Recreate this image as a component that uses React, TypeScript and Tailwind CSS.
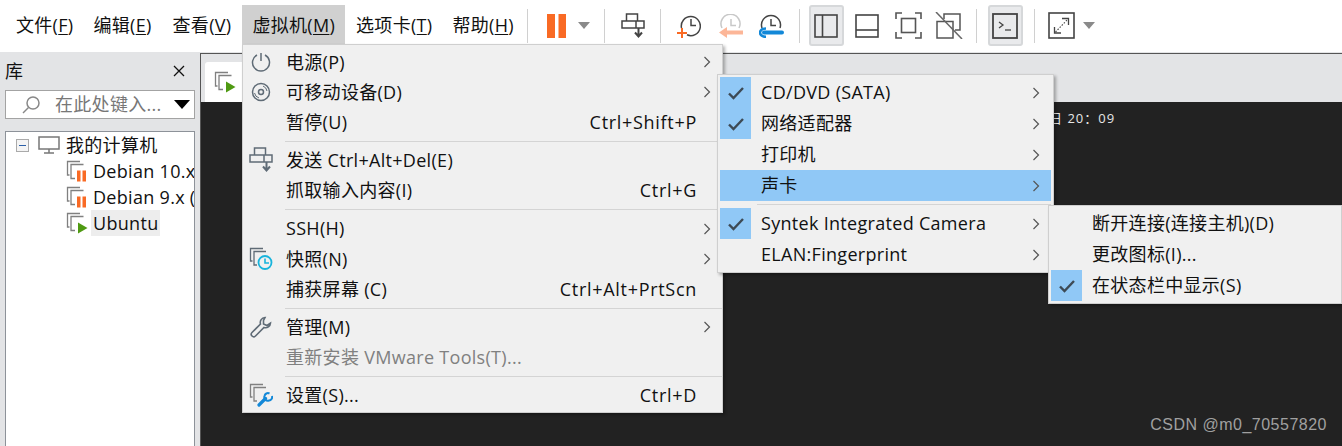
import React from "react";

const FONT = '"Open Sans","Noto Sans CJK SC",sans-serif';

function U({ c }: { c: string }) {
  return <span className="underline underline-offset-2 decoration-1">{c}</span>;
}

function VmIcon({ kind }: { kind: "pause" | "play" }) {
  return (
    <svg width="22" height="22" viewBox="0 0 22 22" fill="none">
      <path d="M14 1.5H1.5V15h2M17.5 4.5H5V18.5h4" stroke="#808080" strokeWidth="1.3" />
      {kind === "pause" ? (
        <>
          <rect x="11" y="10.5" width="3.5" height="11" fill="#f96a24" />
          <rect x="16.5" y="10.5" width="3.5" height="11" fill="#f96a24" />
        </>
      ) : (
        <path d="M12 10.5L21.5 16L12 21.5Z" fill="#4f9a12" />
      )}
    </svg>
  );
}

function SendIcon({ color = "#444" }: { color?: string }) {
  return (
    <svg width="24" height="26" viewBox="0 0 24 26" fill="none" stroke={color} strokeWidth="1.5">
      <path d="M5.5 1H16.5V8H5.5V1ZM1 8H15V15H1V8ZM15 8H23V15H15V8Z" />
      <path d="M17.5 15V22M14 19.5L17.5 23.5L21 19.5" strokeWidth="2" />
    </svg>
  );
}

function ToolButton({ active, children }: { active?: boolean; children: React.ReactNode }) {
  return (
    <div
      className={
        active
          ? "w-[35px] h-[41px] flex items-center justify-center rounded-[3px] border-2 border-[#d6d8da] bg-[#e9eaec] shrink-0"
          : "w-[35px] h-[41px] flex items-center justify-center shrink-0"
      }
    >
      {children}
    </div>
  );
}

function Toolbar() {
  return (
    <div className="flex items-center h-[52px] bg-white pl-[6px]">
      <div className="flex items-center h-[40px] mt-[-2px] text-[#111]">
        <span className="px-[10px] leading-[40px]">文件(<U c="F" />)</span>
        <span className="px-[10px] leading-[40px]">编辑(<U c="E" />)</span>
        <span className="px-[10px] ml-[1px] leading-[40px]">查看(<U c="V" />)</span>
        <span className="px-[10px] ml-[1px] leading-[40px] bg-[#d0d0d0] h-[40px]">虚拟机(<U c="M" />)</span>
        <span className="px-[10px] ml-[1px] leading-[40px]">选项卡(<U c="T" />)</span>
        <span className="px-[10px] leading-[40px]">帮助(<U c="H" />)</span>
      </div>
      <div className="flex items-center ml-[3px] mt-[-1px]">
        <div className="w-px h-[34px] bg-[#d0d0d0] mr-[19px]" />
        <svg width="19" height="24" viewBox="0 0 19 24" className="mr-[12px]">
          <rect x="0" y="0" width="8" height="24" fill="#f96a24" />
          <rect x="11.5" y="0" width="7.5" height="24" fill="#f96a24" />
        </svg>
        <svg width="12" height="7" viewBox="0 0 12 7" className="mr-[14px]"><path d="M0 0H12L6 7Z" fill="#8a8a8a" /></svg>
        <div className="w-px h-[34px] bg-[#d0d0d0] mr-[16px]" />
        <div className="mr-[15px] flex"><SendIcon /></div>
        <div className="w-px h-[34px] bg-[#d0d0d0] mr-[16px]" />
        <svg width="24" height="24" viewBox="0 0 24 24" fill="none" className="mr-[18px]">
          <path d="M4.5 14A9.5 9.5 0 1 1 10 20.8" stroke="#444" strokeWidth="1.5" />
          <path d="M14 5V11.5H19" stroke="#444" strokeWidth="1.5" />
          <path d="M0 19H10M5 14V24" stroke="#f96a24" strokeWidth="2" />
        </svg>
        <svg width="24" height="24" viewBox="0 0 24 24" fill="none" className="mr-[16px]">
          <path d="M3 14A9.5 9.5 0 1 1 20 14" stroke="#c8c8c8" strokeWidth="1.5" />
          <path d="M12 5V11.5H17" stroke="#c8c8c8" strokeWidth="1.5" />
          <path d="M24 18.5H6" stroke="#fcb698" strokeWidth="4" />
          <path d="M0 18.5L8 13V24Z" fill="#fcb698" />
        </svg>
        <svg width="25" height="24" viewBox="0 0 25 24" fill="none" className="mr-[15px]">
          <path d="M3 14A9.5 9.5 0 1 1 21 14" stroke="#444" strokeWidth="1.5" />
          <path d="M12 5V11.5H17" stroke="#444" strokeWidth="1.5" />
          <path d="M5 18.5H23" stroke="#1288d8" strokeWidth="4" strokeLinecap="round" />
          <path d="M7 14.5C2.5 14.5 1 17 1 18.5C1 20 2.5 22.8 7 22.8" stroke="#1288d8" strokeWidth="2.6" />
        </svg>
        <div className="w-px h-[34px] bg-[#d0d0d0] mr-[9px]" />
        <ToolButton active>
          <svg width="24" height="24" viewBox="0 0 24 24" fill="none" stroke="#444" strokeWidth="1.6">
            <rect x="1" y="1" width="22" height="22" /><path d="M8.5 1V23" />
          </svg>
        </ToolButton>
        <div className="ml-[6px]" />
        <ToolButton>
          <svg width="24" height="24" viewBox="0 0 24 24" fill="none" stroke="#444" strokeWidth="1.6">
            <rect x="1" y="1" width="22" height="22" /><path d="M1 16H23" />
          </svg>
        </ToolButton>
        <div className="ml-[6px]" />
        <ToolButton>
          <svg width="27" height="27" viewBox="0 0 27 27" fill="none" stroke="#555" strokeWidth="1.6">
            <path d="M1 7V1H7M20 1H26V7M26 20V26H20M7 26H1V20" />
            <rect x="6.5" y="6.5" width="14" height="14" />
          </svg>
        </ToolButton>
        <div className="ml-[6px]" />
        <ToolButton>
          <svg width="28" height="27" viewBox="0 0 28 27" fill="none" stroke="#555" strokeWidth="1.5">
            <path d="M9 7V2H25V18H20M2 9.5H18V26H2V9.5Z" />
            <path d="M1 0L27 27" stroke="#666" />
          </svg>
        </ToolButton>
        <div className="w-px h-[34px] bg-[#d0d0d0] ml-[9px] mr-[11px]" />
        <ToolButton active>
          <svg width="26" height="26" viewBox="0 0 26 26" fill="none" stroke="#444">
            <rect x="1" y="1" width="24" height="24" strokeWidth="1.8" />
            <path d="M7 9L11 12L7 15" strokeWidth="1.3" />
            <path d="M13 17H19" strokeWidth="1.3" />
          </svg>
        </ToolButton>
        <div className="w-px h-[34px] bg-[#d0d0d0] ml-[11px] mr-[13px]" />
        <svg width="27" height="27" viewBox="0 0 27 27" fill="none" stroke="#444" className="mr-[8px]">
          <rect x="1" y="1" width="25" height="25" strokeWidth="1.6" />
          <path d="M6.5 15V21H13M14 6.5H20.5V13" strokeWidth="1.3" />
          <path d="M7.5 20L19.5 7.5" strokeWidth="1.1" strokeDasharray="1.5 1.5" />
        </svg>
        <svg width="12" height="7" viewBox="0 0 12 7"><path d="M0 0H12L6 7Z" fill="#8a8a8a" /></svg>
      </div>
    </div>
  );
}

function TreeRow({ kind, label, hl }: { kind: "pause" | "play"; label: string; hl?: boolean }) {
  return (
    <div className="flex items-center h-[26px] pl-[60px] whitespace-nowrap">
      <span className="mr-[5px] flex"><VmIcon kind={kind} /></span>
      <span className={hl ? "bg-[#ededed] px-[2px] -ml-[2px] h-[26px] leading-[26px]" : "leading-[26px]"}>{label}</span>
    </div>
  );
}

function Sidebar() {
  return (
    <div className="w-[195px] shrink-0 flex flex-col pl-[5px] h-full">
      <div className="flex items-center justify-between h-[38px] pr-[10px] text-[#111]">
        <span>库</span>
        <svg width="12" height="12" viewBox="0 0 12 12" stroke="#111" strokeWidth="1.3"><path d="M1 1L11 11M11 1L1 11" /></svg>
      </div>
      <div className="h-[29px] flex items-center bg-white border border-[#a3a3a3] pl-[15px] pr-[4px]">
        <svg width="20" height="20" viewBox="0 0 20 20" fill="none" stroke="#888" strokeWidth="1.5" className="mr-[14px]">
          <circle cx="12" cy="8" r="6" /><path d="M7.5 12.5L2 18" />
        </svg>
        <span className="text-[#777] flex-1 whitespace-nowrap overflow-hidden">在此处键入...</span>
        <svg width="16" height="9" viewBox="0 0 16 9"><path d="M0 0H16L8 9Z" fill="#000" /></svg>
      </div>
      <div className="flex-1 mt-[12px] bg-white border border-[#8d9299] border-b-0 overflow-hidden text-[#111]">
        <div className="flex items-center h-[26px] pl-[10px] whitespace-nowrap">
          <span className="w-[13px] h-[13px] border border-[#aaa] bg-[#f4f4f4] flex items-center justify-center mr-[9px]">
            <span className="block w-[7px] h-[1px] bg-[#2b5fa8]" />
          </span>
          <svg width="22" height="20" viewBox="0 0 22 20" fill="none" stroke="#777" strokeWidth="1.5" className="mr-[6px]">
            <rect x="1" y="2" width="20" height="12" /><path d="M11 14V18M6 18H16" />
          </svg>
          <span>我的计算机</span>
        </div>
        <TreeRow kind="pause" label="Debian 10.x" />
        <TreeRow kind="pause" label="Debian 9.x (" />
        <TreeRow kind="play" label="Ubuntu" hl />
      </div>
    </div>
  );
}

type Item = {
  label?: React.ReactNode;
  icon?: React.ReactNode;
  check?: boolean;
  hover?: boolean;
  short?: string;
  arrow?: boolean;
  dim?: boolean;
  sep?: boolean;
  tall?: boolean;
};

function Chevron() {
  return (
    <svg width="8" height="12" viewBox="0 0 8 12" fill="none" stroke="#555" strokeWidth="1.2"><path d="M1.5 1L6.5 6L1.5 11" /></svg>
  );
}

function Check() {
  return (
    <svg width="18" height="14" viewBox="0 0 18 14" fill="none" stroke="#3d4a55" strokeWidth="2.4"><path d="M2 7.5L6.5 12L16 2" /></svg>
  );
}

function Row({ it, iconW, h, rightPad, gap }: { it: Item; iconW: number; h: number; rightPad: number; gap: number }) {
  return (
    <div
      className={
        (it.hover ? "bg-[#90c8f6] " : "") + "flex items-center " + (it.dim ? "text-[#808080]" : "text-[#111]")
      }
      style={{ height: it.tall ? h + 1 : h, paddingRight: rightPad }}
    >
      <div
        className={(it.check ? "bg-[#90c8f6] " : "") + "flex items-center justify-center shrink-0 h-full"}
        style={{ width: iconW }}
      >
        {it.check ? <Check /> : it.icon}
      </div>
      <span className="flex-1 whitespace-nowrap" style={{ marginLeft: gap }}>{it.label}</span>
      {it.short ? <span className="whitespace-nowrap mr-[14px] tracking-[0.7px]">{it.short}</span> : null}
      {it.arrow ? <Chevron /> : null}
    </div>
  );
}

function Power() {
  return (
    <svg width="20" height="20" viewBox="0 0 20 20" fill="none" stroke="#5f6b76" strokeWidth="1.5">
      <path d="M6 3A8.5 8.5 0 1 0 14 3M10 1V9" />
    </svg>
  );
}
function Disc() {
  return (
    <svg width="20" height="20" viewBox="0 0 20 20" fill="none" stroke="#5f6b76" strokeWidth="1.5">
      <circle cx="10" cy="10" r="8.5" /><circle cx="10" cy="10" r="2.5" /><path d="M3.5 11A6.5 6.5 0 0 0 8 16M16 9A6.5 6.5 0 0 0 12 4" strokeWidth="1" />
    </svg>
  );
}
function Snapshot() {
  return (
    <svg width="24" height="24" viewBox="0 0 24 24" fill="none">
      <path d="M14 1.5H1.5V14h2M17 4.5H5V18h3" stroke="#5f6b76" strokeWidth="1.3" />
      <circle cx="16" cy="15.5" r="6.5" stroke="#18b4dc" strokeWidth="1.8" fill="#f0f0f0" />
      <path d="M16 11.5V16H20" stroke="#18b4dc" strokeWidth="1.6" />
    </svg>
  );
}
function Wrench() {
  return (
    <svg width="22" height="22" viewBox="0 0 22 22" fill="none" stroke="#5f6b76" strokeWidth="1.6">
      <path d="M15 1.5A5 5 0 0 0 10.5 8L2 16.5A2.3 2.3 0 0 0 5.5 20L14 11.5A5 5 0 0 0 20.5 7L17 9.5L13.5 8L13.5 4.5L15 1.5Z" />
    </svg>
  );
}
function Settings() {
  return (
    <svg width="24" height="24" viewBox="0 0 24 24" fill="none">
      <path d="M14 1.5H1.5V14h2M17 4.5H5V18h3" stroke="#808080" strokeWidth="1.3" />
      <path d="M10 22L16.5 15.5" stroke="#1288d8" strokeWidth="3.2" strokeLinecap="round" />
      <path d="M20.5 10.5A3.5 3.5 0 0 0 15.5 13A3.5 3.5 0 0 0 20 17.5A3.5 3.5 0 0 0 23 13" stroke="#1288d8" strokeWidth="2" />
    </svg>
  );
}

const main: Item[] = [
  { label: "电源(P)", icon: <Power />, arrow: true },
  { label: "可移动设备(D)", icon: <Disc />, arrow: true },
  { label: "暂停(U)", short: "Ctrl+Shift+P" },
  { sep: true },
  { label: "发送 Ctrl+Alt+Del(E)", icon: <SendIcon color="#5f6b76" /> },
  { label: "抓取输入内容(I)", short: "Ctrl+G" },
  { sep: true },
  { label: "SSH(H)", arrow: true, tall: true },
  { label: "快照(N)", icon: <Snapshot />, arrow: true },
  { label: "捕获屏幕 (C)", short: "Ctrl+Alt+PrtScn" },
  { sep: true },
  { label: "管理(M)", icon: <Wrench />, arrow: true },
  { label: "重新安装 VMware Tools(T)...", dim: true },
  { sep: true },
  { label: "设置(S)...", icon: <Settings />, short: "Ctrl+D" },
];

const devices: Item[] = [
  { label: "CD/DVD (SATA)", check: true, arrow: true },
  { label: "网络适配器", check: true, arrow: true },
  { label: "打印机", arrow: true },
  { label: "声卡", arrow: true, hover: true },
  { sep: true },
  { label: "Syntek Integrated Camera", check: true, arrow: true },
  { label: "ELAN:Fingerprint", arrow: true },
];

const sound: Item[] = [
  { label: "断开连接(连接主机)(D)" },
  { label: "更改图标(I)..." },
  { label: "在状态栏中显示(S)", check: true },
];

function Menu({ items, className, iconW, h, rightPad, sepLeft, gap, sepH }: { items: Item[]; className: string; iconW: number; h: number; rightPad: number; sepLeft: number; gap: number; sepH: number }) {
  return (
    <div className={"absolute bg-[#f0f0f0] border border-[#cfcfcf] shadow-[2px_2px_3px_rgba(0,0,0,0.3)] " + className}>
      {items.map((it, i) =>
        it.sep ? (
          <div key={i} className="flex items-center" style={{ paddingLeft: sepLeft, height: sepH }}>
            <div className="h-px w-full bg-[#d4d4d4]" />
          </div>
        ) : (
          <Row key={i} it={it} iconW={iconW} h={h} rightPad={rightPad} gap={gap} />
        )
      )}
    </div>
  );
}

export default function App() {
  return (
    <div className="relative w-[1342px] h-[446px] overflow-hidden bg-[#e3e4e6] text-[18px] tracking-[0.3px]" style={{ fontFamily: FONT }}>
      <Toolbar />
      <div className="flex h-[394px]">
        <Sidebar />
        <div className="flex-1 ml-[5px] flex flex-col border-l border-t border-[#555] border-b-0 mt-[1px]">
          <div className="h-[48px] flex items-end pl-[4px]">
            <div className="w-[60px] h-[40px] bg-white rounded-tl-[3px] flex items-center pl-[9px]">
              <VmIcon kind="play" />
            </div>
          </div>
          <div className="flex-1 bg-[#222222] relative">
            <span className="absolute left-[848px] top-[7px] text-[13px] leading-[18px] tracking-[1px] text-[#e6e6e6] whitespace-nowrap">日 20：09</span>
            <span className="absolute right-[15px] bottom-[9px] text-[16px] tracking-[0.5px] text-[#a0a0a0] whitespace-nowrap" style={{ fontFamily: '"Liberation Sans",sans-serif' }}>CSDN @m0_70557820</span>
          </div>
        </div>
      </div>
      <Menu className="left-[242px] top-[44px] w-[481px] pt-[2px] pb-[2px]" items={main} iconW={36} h={30} rightPad={11} sepLeft={42} gap={7} sepH={8} />
      <Menu className="left-[717px] top-[74px] w-[337px] pt-[2px] pb-[2px] px-[2px]" items={devices} iconW={31} h={31} rightPad={11} sepLeft={37} gap={10} sepH={7} />
      <Menu className="left-[1048px] top-[205px] w-[294px] pt-[2px] pb-[2px] px-[2px]" items={sound} iconW={31} h={31} rightPad={11} sepLeft={37} gap={10} sepH={7} />
    </div>
  );
}
